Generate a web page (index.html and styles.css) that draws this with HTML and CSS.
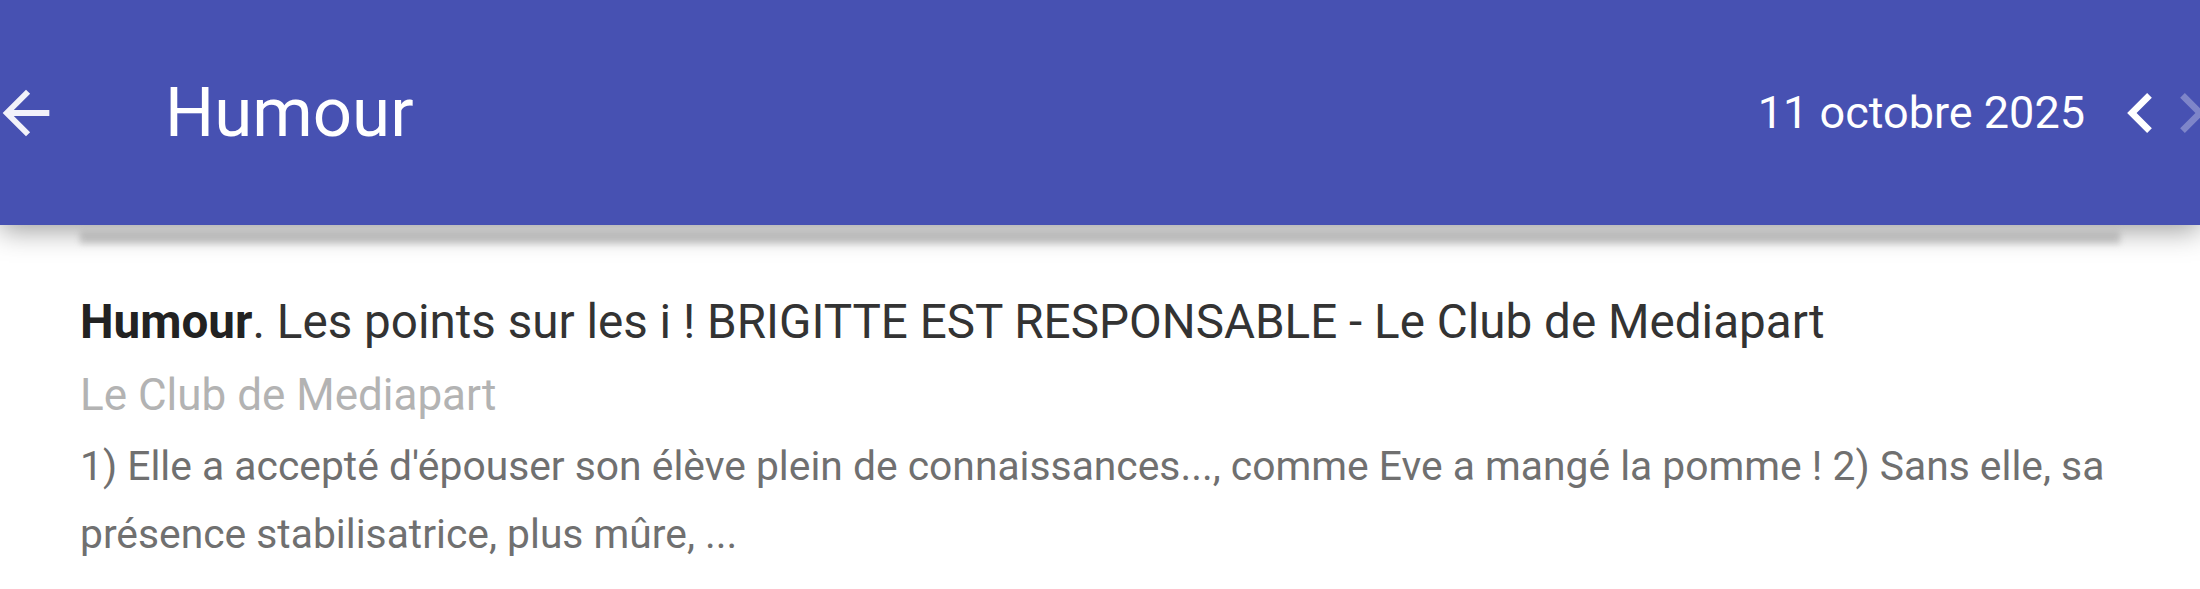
FILE: index.html
```html
<!DOCTYPE html>
<html lang="fr">

<head>
    <meta charset="UTF-8">
    <meta name="viewport" content="width=device-width, initial-scale=1.0">
    <title>Humour</title>
    <link rel="stylesheet" href="styles.css">
</head>

<body>
    <header class="app-bar">
        <svg class="back-icon" viewBox="0 0 24 24" width="70" height="70">
            <path d="M20 11H7.83l5.59-5.59L12 4l-8 8 8 8 1.41-1.41L7.83 13H20v-2z" />
        </svg>
        <h1 class="app-title">Humour</h1>
        <div class="date-nav">
            <span class="date">11 octobre 2025</span>
            <svg class="chevron" viewBox="8 6 7.41 12" width="25" height="40">
                <path d="M15.41 7.41L14 6l-6 6 6 6 1.41-1.41L10.83 12z" />
            </svg>
            <svg class="chevron disabled" viewBox="8.59 6 7.41 12" width="25" height="40">
                <path d="M10 6L8.59 7.41 13.17 12l-4.58 4.59L10 18l6-6z" />
            </svg>
        </div>
    </header>

    <div class="rule"></div>

    <!-- one news item -->
    <article class="item">
        <h2 class="item-title"><b>Humour</b>. Les points sur les i ! BRIGITTE EST RESPONSABLE - Le Club de Mediapart</h2>
        <div class="item-source">Le Club de Mediapart</div>
        <p class="item-snippet">1) Elle a accepté d'épouser son élève plein de connaissances..., comme Eve a mangé la pomme ! 2) Sans elle, sa présence stabilisatrice, plus mûre, ...</p>
    </article>
</body>

</html>
```

FILE: styles.css
```css
body {
    margin: 0;
    background-color: white;
    font-family: Roboto, "Liberation Sans", sans-serif;
    overflow: hidden;
}

.app-bar {
    position: relative;
    z-index: 1;
    display: flex;
    align-items: center;
    height: 225px;
    background-color: #4751b2;
    color: white;
    box-shadow: 0 6px 26px rgba(0, 0, 0, 0.38);
}

.back-icon {
    flex: none;
    margin-left: -9px;
    fill: #f2f2fa;
}

.app-title {
    flex: 1;
    margin: 0 0 0 104px;
    font-size: 69px;
    font-weight: 400;
}

.date-nav {
    display: flex;
    align-items: center;
    margin-right: -5px;
}

.date {
    font-size: 45px;
}

.chevron {
    fill: white;
    margin-left: 42px;
}

.chevron.disabled {
    margin-left: 28px;
    fill: rgba(255, 255, 255, 0.3);
}

.rule {
    height: 12px;
    margin: 7px 80px 0;
    background-color: #d6d6d6;
    filter: blur(3px);
}

.item {
    padding: 48px 80px 0;
}

.item-title {
    margin: 0;
    font-size: 47.6px;
    line-height: 60px;
    font-weight: 400;
    color: #333;
}

.item-title b {
    font-weight: 700;
    color: #222;
}

.item-source {
    margin-top: 15px;
    font-size: 44px;
    line-height: 56px;
    color: #b3b3b3;
}

.item-snippet {
    margin: 9px 0 0;
    font-size: 40.8px;
    line-height: 68px;
    color: #707070;
}
```
